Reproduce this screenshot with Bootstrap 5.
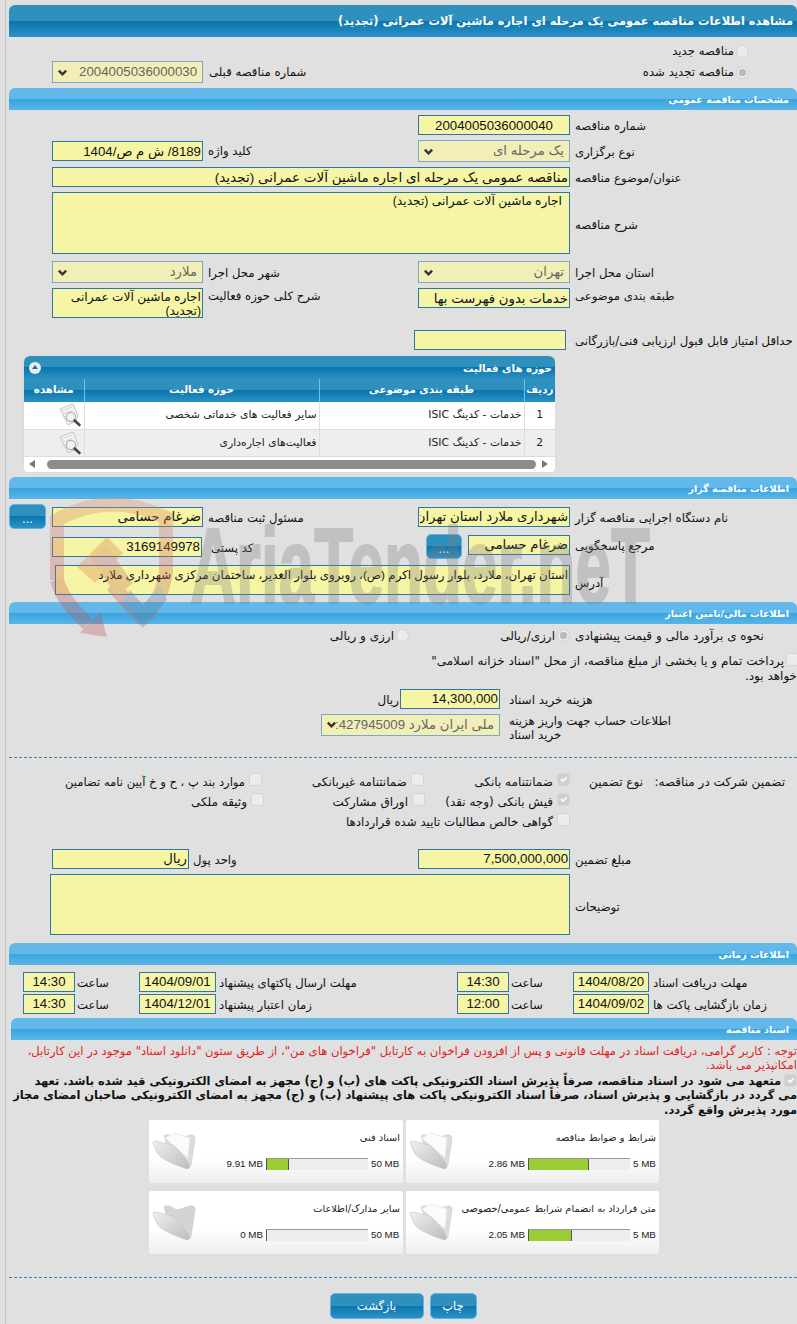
<!DOCTYPE html>
<html lang="fa" dir="rtl">
<head>
<meta charset="utf-8">
<title>مشاهده اطلاعات مناقصه</title>
<link href="https://cdn.jsdelivr.net/npm/bootstrap@5.3.0/dist/css/bootstrap.min.css" rel="stylesheet">
<style>
html,body{margin:0;padding:0;background:#e0e0e0;}
body{font-family:"DejaVu Sans",sans-serif;font-size:11.7px;line-height:14.5px;color:#111;overflow-x:hidden;}
.pg{position:relative;height:1324px;margin-left:5px;padding-left:3px;border-left:1px solid #c8c8c8;overflow:hidden;}
.ttl{height:32px;margin-top:5px;padding:9px 4px 0 0;color:#fff;font-weight:700;font-size:11.4px;border-radius:6px 6px 0 0;white-space:nowrap;overflow:hidden;background:linear-gradient(#2f90bd 0,#2f90bd 50%,#0a74ac 50%,#2b92c6 100%);}
.sec{height:22px;padding:5px 8px 0 0;color:#fff;font-weight:700;font-size:9.5px;line-height:13px;border-radius:6px 6px 0 0;background:linear-gradient(#62b9e9 0,#62b9e9 48%,#36a4df 48%,#5ab5e6 100%);}
.sec2{margin-left:2px;}
.rw{display:flex;align-items:flex-start;white-space:nowrap;}
.lbr{width:227px;flex:none;text-align:left;padding-left:5px;padding-top:4px;}
.lbl{width:215px;flex:none;text-align:left;padding-left:5px;padding-top:4px;}
.fr{width:152px;flex:none;}
.fl{width:151px;flex:none;}
.form-control.fld{height:20px;min-height:0;padding:0 1px;border:1px solid #2c77a7;border-radius:0;background:#f6f5a5;font-family:"Liberation Sans","DejaVu Sans",sans-serif;font-size:13.25px;line-height:18px;color:#111;box-shadow:none;}
.form-control.fld.big{font-size:13.5px;}
textarea.form-control.fld{resize:none;overflow:hidden;font-size:12.2px;line-height:14px;padding:1px;}
textarea.form-control.fld.ind{padding:1px 7px 1px 1px;}
textarea.form-control.fld.adr{font-size:11.8px;padding-top:2px;}
.form-select.sel{height:22px;padding:0 5px 0 14px;border:1px solid #7ea8c2;border-radius:0;font-family:"Liberation Sans","DejaVu Sans",sans-serif;font-size:13.25px;line-height:20px;color:#666;background-color:#f1efb7;background-image:url("data:image/svg+xml,%3Csvg xmlns='http://www.w3.org/2000/svg' viewBox='0 0 12 12'%3E%3Cpath d='M2 4l4 4 4-4' fill='none' stroke='%23333' stroke-width='2.6'/%3E%3C/svg%3E");background-position:left 4px center;background-size:11px 11px;box-shadow:none;opacity:1;}
.num{text-align:center;}
.m0{margin-top:1px;}.m1{margin-top:5px;}.m2{margin-top:6px;}.m3{margin-top:7px;}.m4{margin-top:8px;}
.rd{display:flex;align-items:center;gap:2px;}
.form-check-input.ck{float:none;flex:none;width:13px;height:13px;margin:0;border:1px solid #d4d4d4;background-color:#ececec;opacity:1;box-shadow:none;}
.form-check-input.ck[type=checkbox]{border-radius:3px;}
.form-check-input.ck[type=checkbox]:checked{background-color:#cfcfcf;border-color:#d8d8d8;}
.form-check-input.ck[type=radio]:checked{background-color:#ececec;border-color:#d0d0d0;background-image:radial-gradient(circle,#bbb 0,#bbb 3.5px,transparent 4px);}
.radA{padding:4px 48px 0 0;height:24px;}
.radB{justify-content:space-between;height:22px;padding-left:43px;padding-right:48px;}
.gp{width:6px;flex:none;}
.gp4{width:4px;flex:none;}
.fw{width:518px;flex:none;}
.tb{width:531px;margin:6px 242px 0 0;background:#fff;border-radius:6px 6px 4px 4px;overflow:hidden;box-shadow:0 0 1px #aac;position:relative;}
.tbh{height:23px;color:#fff;font-weight:700;font-size:10.3px;padding:5px 3px 0 0;background:linear-gradient(#2f90bd 0,#2f90bd 50%,#0a74ac 50%,#2b92c6 100%);position:relative;}
.tog{position:absolute;left:5px;top:6px;width:12px;height:12px;border-radius:50%;background:#e8eef3;}
.tog::before{content:"";position:absolute;left:3px;top:3px;border:3px solid transparent;border-bottom:4px solid #1e6f9f;border-top:0;}
.table.grd{margin:0;table-layout:fixed;width:531px;--bs-table-bg:transparent;font-size:10.8px;}
.grd col.c1{width:31px;}.grd col.c2{width:205px;}.grd col.c3{width:235px;}.grd col.c4{width:60px;}
.grd th{height:23px;padding:3px 0 0;color:#fff;font-size:10.3px;font-weight:700;text-align:center;border:0;border-left:1px solid #6fc0ea;background:linear-gradient(#2f90bd 0,#2f90bd 50%,#0a74ac 50%,#2b92c6 100%);vertical-align:top;white-space:nowrap;}
.grd th:last-child{border-left:0;}
.grd td{height:27px;padding:6px 2px 0;border:0;border-left:1px solid #ddd;border-bottom:1px solid #ddd;vertical-align:top;background:#fff;color:#222;white-space:nowrap;}
.grd td:last-child{border-left:0;}
.grd tr.alt td{background:#eee;}
.grd td.ic{padding:1px 2px 0 0;text-align:right;line-height:0;}
.sb{height:15px;position:relative;background:#fff;}
.sbt{position:absolute;left:23px;right:19px;top:3px;height:9px;background:#8c8c8c;border-radius:5px;}
.arl,.arr{position:absolute;top:3px;border:4.5px solid transparent;}
.arl{left:5px;border-left:0;border-right:6px solid #777;}
.arr{right:7px;border-right:0;border-left:6px solid #777;}
.bt.btn{display:block;padding:0;border:1px solid #5bb6e6;border-radius:5px;color:#fff;font-size:11.5px;line-height:16px;background:linear-gradient(#2f90bd 0,#2f90bd 48%,#0a74ac 48%,#2b92c6 100%);flex:none;}
.btdot{width:37px;height:25px;padding-top:5px!important;}
.w36.btn{width:36px;}
.bup{margin-top:-3px;}
.w102{width:102px;flex:none;}
.w150{width:150px;flex:none;}
.lbk{width:224px;flex:none;text-align:left;padding:7px 0 0 9px;}
.t1{margin-top:1px;}.t3{margin-top:3px;}
.addr{width:515px;flex:none;}
.form-control.fld.h30{height:30px;}
.form-control.fld.h62{height:62px;}
.form-control.fld.h61{height:61px;}
.hrdash{border:0;border-top:1px dashed #3f7fa8;opacity:1;margin:0;}
.mny{font-size:12px;}
.rh14{height:14px;margin-top:5px;}
.rad2{width:161px;flex:none;}
.payp{margin-top:10px;height:30px;line-height:15px;white-space:nowrap;}
.payp .ck{vertical-align:-1px;margin:0 -2px 0 2px;}
.lbd{width:297px;flex:none;text-align:left;padding:4px 0 0 9px;}
.w100{width:100px;flex:none;}
.w179{width:179px;flex:none;}
.ril{padding:4px 1px 0 0;}
.hr1{margin-top:14px;}
.gr{height:20px;}
.gr1{margin-top:15px;}
.guar{width:137px;flex:none;text-align:right;padding:2px 12px 0 0;}
.gt{width:90px;flex:none;text-align:right;padding:2px 17px 0 0;}
.gsp{width:227px;flex:none;}
.gi{display:flex;align-items:flex-start;gap:4px;}
.gi span{padding-top:2px;}
.gi span.nar{font-size:11.55px;}
.gi span.nar2{font-size:11.8px;}
.g1{width:146px;flex:none;}.g2{width:162px;flex:none;}
.g1b{width:145px;flex:none;}.g2b{width:161px;flex:none;}
.amt{margin-top:16px;}
.lbu{width:229px;flex:none;text-align:left;padding:4px 0 0 4px;}
.w137{width:137px;flex:none;}
.w520{width:520px;flex:none;}
.lb1{width:148px;flex:none;text-align:left;padding:4px 0 0 4px;}
.lb2{width:241px;flex:none;text-align:left;padding:4px 0 0 3px;}
.fd1{width:76px;flex:none;}.fd2{width:77px;flex:none;}.ft{width:52px;flex:none;}
.sa{width:64px;flex:none;text-align:left;padding:4px 0 0 2px;}
.gap2{margin-top:2px;}
.red{color:#e11d1d;margin-top:4px;white-space:nowrap;font-size:11.55px;}
.bld{font-weight:700;margin-top:1px;height:44px;white-space:nowrap;color:#111;font-size:11.45px;}
.bld .ck{vertical-align:-2px;margin-left:3px;}
.cards{display:grid;grid-template-columns:253px 254px;column-gap:3px;row-gap:8px;justify-content:start;margin:2px 138px 0 0;}
.fc{height:63px;position:relative;border-radius:2px;background:linear-gradient(#fff 0,#fff 60%,#eee 100%);box-shadow:0 0 1px #ddd;}
.fct{position:absolute;right:3px;top:11px;font-size:9.8px;color:#222;white-space:nowrap;}
.fcb{position:absolute;right:5px;top:37px;display:flex;align-items:center;gap:3px;font-family:"Liberation Sans",sans-serif;font-size:9.8px;color:#222;direction:ltr;flex-direction:row-reverse;white-space:nowrap;}
.mb5{width:21px;}.mb50{width:27px;}
.brr{width:102px;height:12px;background:#eee;border-top:1px solid #999;border-left:1px solid #555;position:relative;direction:ltr;}
.brf{height:11px;background:#9acd32;border-right:1px solid #555;}
.brf0{width:0;border-right:0;}.brf1{width:60px;}.brf2{width:43px;}.brf3{width:22px;}
.fic{position:absolute;left:3px;top:12px;width:44px;height:40px;}
.hd1{margin-top:23px;}
.actions{display:flex;justify-content:center;gap:6px;margin-top:15px;}
.bpr{width:47px;height:26px;}.bbk{width:94px;height:26px;}
.wm{position:absolute;left:-6px;top:0;width:797px;height:1324px;pointer-events:none;}
.rw .s5{padding-top:5px;}.rw .s1{padding-top:1px;}.rw .s26{padding-top:26px;}.rw .s10{padding-top:11px;}.rw .s0{padding-top:0;}
</style>
</head>
<body>
<div class="pg">
  <div class="ttl">مشاهده اطلاعات مناقصه عمومی یک مرحله ای اجاره ماشین آلات عمرانی (تجدید)</div>
  <div class="rd radA"><input class="form-check-input ck" type="radio" disabled><span>مناقصه جدید</span></div>
  <div class="rw radB">
    <div class="rd h-100"><input class="form-check-input ck" type="radio" checked disabled><span>مناقصه تجدید شده</span></div>
    <div class="d-flex align-items-center">
      <span>شماره مناقصه قبلی</span><span class="gp"></span>
      <select class="form-select sel fl" disabled><option>2004005036000030</option></select>
    </div>
  </div>
  <div class="sec m1">مشخصات مناقصه عمومی</div>

  <div class="rw m1"><div class="lbr">شماره مناقصه</div><div class="fr"><input class="form-control fld num" value="2004005036000040" readonly></div></div>
  <div class="rw m1">
    <div class="lbr s5">نوع برگزاری</div><div class="fr"><select class="form-select sel" disabled><option>یک مرحله ای</option></select></div>
    <div class="lbl">کلید واژه</div><div class="fl m0"><input class="form-control fld" value="8189/ ش م ص/1404" readonly></div>
  </div>
  <div class="rw m1"><div class="lbr">عنوان/موضوع مناقصه</div><div class="fw"><input class="form-control fld big" value="مناقصه عمومی یک مرحله ای اجاره ماشین آلات عمرانی (تجدید)" readonly></div></div>
  <div class="rw m1"><div class="lbr s26">شرح مناقصه</div><div class="fw"><textarea class="form-control fld h62 ind" readonly>اجاره ماشین آلات عمرانی (تجدید)</textarea></div></div>
  <div class="rw m3">
    <div class="lbr s5">استان محل اجرا</div><div class="fr"><select class="form-select sel" disabled><option>تهران</option></select></div>
    <div class="lbl s5">شهر محل اجرا</div><div class="fl"><select class="form-select sel" disabled><option>ملارد</option></select></div>
  </div>
  <div class="rw m1">
    <div class="lbr s1">طبقه بندی موضوعی</div><div class="fr"><input class="form-control fld" value="خدمات بدون فهرست بها" readonly></div>
    <div class="lbl s1">شرح کلی حوزه فعالیت</div><div class="fl"><textarea class="form-control fld h30" readonly>اجاره ماشین آلات عمرانی (تجدید)</textarea></div>
  </div>
  <div class="rw mt-2 pt-1">
    <div class="lbr">حداقل امتیاز قابل قبول ارزیابی فنی/بازرگانی</div><span class="gp4"></span><div class="fr"><input class="form-control fld" readonly></div>
  </div>

  <div class="tb">
    <div class="tbh">حوزه های فعالیت<span class="tog"></span></div>
    <table class="table grd">
      <colgroup><col class="c1"><col class="c2"><col class="c3"><col class="c4"></colgroup>
      <thead><tr><th>ردیف</th><th>طبقه بندی موضوعی</th><th>حوزه فعالیت</th><th>مشاهده</th></tr></thead>
      <tbody>
        <tr><td class="text-center">1</td><td>خدمات - کدینگ ISIC</td><td>سایر فعالیت های خدماتی شخصی</td><td class="ic"><svg width="25" height="24" viewBox="0 0 25 24"><use href="#doc"/></svg></td></tr>
        <tr class="alt"><td class="text-center">2</td><td>خدمات - کدینگ ISIC</td><td>فعالیت‌های اجاره‌داری</td><td class="ic"><svg width="25" height="24" viewBox="0 0 25 24"><use href="#doc"/></svg></td></tr>
      </tbody>
    </table>
    <div class="sb"><span class="arl"></span><span class="sbt"></span><span class="arr"></span></div>
  </div>

  <div class="sec m1">اطلاعات مناقصه گزار</div>
  <div class="rw m4">
    <div class="lbr">نام دستگاه اجرایی مناقصه گزار</div><div class="fr"><input class="form-control fld" value="شهرداری ملارد استان تهران" readonly></div>
    <div class="lbl">مسئول ثبت مناقصه</div><div class="fl"><input class="form-control fld" value="ضرغام حسامی" readonly></div>
    <span class="gp"></span><button class="btn bt btdot bup" type="button">...</button>
  </div>
  <div class="rw m1">
    <div class="lbr s5">مرجع پاسخگویی</div>
    <div class="w102 t1"><input class="form-control fld" value="ضرغام حسامی" readonly></div>
    <span class="gp"></span><button class="btn bt btdot w36" type="button">...</button>
    <div class="lbk">کد پستی</div>
    <div class="w150 t3"><input class="form-control fld" value="3169149978" readonly></div>
  </div>
  <div class="rw m2">
    <div class="lbr s10">آدرس</div>
    <div class="addr"><textarea class="form-control fld h30 adr" readonly>استان تهران، ملارد، بلوار رسول اکرم (ص)، روبروی بلوار الغدیر، ساختمان مرکزی شهرداری ملارد</textarea></div>
  </div>

  <div class="sec m3">اطلاعات مالی/تامین اعتبار</div>
  <div class="rw rh14 mny">
    <div class="lbr s0">نحوه ی برآورد مالی و قیمت پیشنهادی</div>
    <div class="rd rad2"><input class="form-check-input ck" type="radio" checked disabled><span>ارزی/ریالی</span></div>
    <div class="rd"><input class="form-check-input ck" type="radio" disabled><span>ارزی و ریالی</span></div>
  </div>
  <div class="payp mny"><input class="form-check-input ck" type="checkbox" disabled>پرداخت تمام و یا بخشی از مبلغ مناقصه، از محل "اسناد خزانه اسلامی"<br>خواهد بود.</div>
  <div class="rw m2 mny">
    <div class="lbd">هزینه خرید اسناد</div>
    <div class="w100"><input class="form-control fld" value="14,300,000" readonly></div>
    <div class="ril">ریال</div>
  </div>
  <div class="rw m1">
    <div class="lbd s0">اطلاعات حساب جهت واریز هزینه<br>خرید اسناد</div>
    <div class="w179"><select class="form-select sel" disabled><option>ملی ایران ملارد 427945009:</option></select></div>
  </div>
  <hr class="hrdash hr1">

  <div class="rw gr gr1 mny">
    <div class="guar">تضمین شرکت در مناقصه:</div>
    <div class="gt">نوع تضمین</div>
    <div class="gi g1"><input class="form-check-input ck" type="checkbox" checked disabled><span>ضمانتنامه بانکی</span></div>
    <div class="gi g2"><input class="form-check-input ck" type="checkbox" disabled><span>ضمانتنامه غیربانکی</span></div>
    <div class="gi"><input class="form-check-input ck" type="checkbox" disabled><span class="nar">موارد بند پ ، ح و خ آیین نامه تضامین</span></div>
  </div>
  <div class="rw gr mny">
    <div class="gsp"></div>
    <div class="gi g1b"><input class="form-check-input ck" type="checkbox" checked disabled><span>فیش بانکی (وجه نقد)</span></div>
    <div class="gi g2b"><input class="form-check-input ck" type="checkbox" disabled><span>اوراق مشارکت</span></div>
    <div class="gi"><input class="form-check-input ck" type="checkbox" disabled><span>وثیقه ملکی</span></div>
  </div>
  <div class="rw gr mny">
    <div class="gsp"></div>
    <div class="gi"><input class="form-check-input ck" type="checkbox" disabled><span class="nar2">گواهی خالص مطالبات تایید شده قراردادها</span></div>
  </div>

  <div class="rw amt">
    <div class="lbr">مبلغ تضمین</div><div class="fr"><input class="form-control fld" value="7,500,000,000" readonly></div>
    <div class="lbu">واحد پول</div><div class="w137"><input class="form-control fld" value="ریال" readonly></div>
  </div>
  <div class="rw m1">
    <div class="lbr s26">توضیحات</div><div class="w520"><textarea class="form-control fld h61" readonly></textarea></div>
  </div>

  <div class="sec m4">اطلاعات زمانی</div>
  <div class="rw m3">
    <div class="lb1">مهلت دریافت اسناد</div><div class="fd1"><input class="form-control fld num" value="1404/08/20" readonly></div>
    <div class="sa">ساعت</div><div class="ft"><input class="form-control fld num" value="14:30" readonly></div>
    <div class="lb2">مهلت ارسال پاکتهای پیشنهاد</div><div class="fd2"><input class="form-control fld num" value="1404/09/01" readonly></div>
    <div class="sa">ساعت</div><div class="ft"><input class="form-control fld num" value="14:30" readonly></div>
  </div>
  <div class="rw gap2">
    <div class="lb1">زمان بازگشایی پاکت ها</div><div class="fd1"><input class="form-control fld num" value="1404/09/02" readonly></div>
    <div class="sa">ساعت</div><div class="ft"><input class="form-control fld num" value="12:00" readonly></div>
    <div class="lb2">زمان اعتبار پیشنهاد</div><div class="fd2"><input class="form-control fld num" value="1404/12/01" readonly></div>
    <div class="sa">ساعت</div><div class="ft"><input class="form-control fld num" value="14:30" readonly></div>
  </div>

  <div class="sec sec2 mt-1">اسناد مناقصه</div>
  <div class="red">توجه : کاربر گرامی، دریافت اسناد در مهلت قانونی و پس از افزودن فراخوان به کارتابل "فراخوان های من"، از طریق ستون "دانلود اسناد" موجود در این کارتابل،<br>امکانپذیر می باشد.</div>
  <div class="bld"><input class="form-check-input ck" type="checkbox" checked disabled>متعهد می شود در اسناد مناقصه، صرفاً پذیرش اسناد الکترونیکی پاکت های (ب) و (ج) مجهز به امضای الکترونیکی قید شده باشد. تعهد<br>می گردد در بازگشایی و پذیرش اسناد، صرفاً اسناد الکترونیکی پاکت های پیشنهاد (ب) و (ج) مجهز به امضای الکترونیکی صاحبان امضای مجاز<br>مورد پذیرش واقع گردد.</div>

  <div class="cards">
    <div class="fc"><div class="fct">شرایط و ضوابط مناقصه</div><div class="fcb"><span class="mb5">5 MB</span><div class="brr"><div class="brf brf1"></div></div><span>2.86 MB</span></div><svg class="fic" viewBox="0 0 44 40"><use href="#fold"/></svg></div>
    <div class="fc"><div class="fct">اسناد فنی</div><div class="fcb"><span class="mb50">50 MB</span><div class="brr"><div class="brf brf3"></div></div><span>9.91 MB</span></div><svg class="fic" viewBox="0 0 44 40"><use href="#fold"/></svg></div>
    <div class="fc"><div class="fct">متن قرارداد به انضمام شرایط عمومی/خصوصی</div><div class="fcb"><span class="mb5">5 MB</span><div class="brr"><div class="brf brf2"></div></div><span>2.05 MB</span></div><svg class="fic" viewBox="0 0 44 40"><use href="#fold"/></svg></div>
    <div class="fc"><div class="fct">سایر مدارک/اطلاعات</div><div class="fcb"><span class="mb50">50 MB</span><div class="brr"><div class="brf brf0"></div></div><span>0 MB</span></div><svg class="fic" viewBox="0 0 44 40"><use href="#fold0"/></svg></div>
  </div>

  <hr class="hrdash hd1">
  <div class="actions">
    <button class="btn bt bpr" type="button">چاپ</button>
    <button class="btn bt bbk" type="button">بازگشت</button>
  </div>

  <svg class="wm" viewBox="0 0 797 1324" aria-hidden="true">
    <defs>
      <linearGradient id="fg" x1="0" y1="0" x2="1" y2="1"><stop offset="0" stop-color="#f0f0f0"/><stop offset="1" stop-color="#bcbcbc"/></linearGradient>
      <linearGradient id="shg" x1="0" y1="0" x2="0" y2="1"><stop offset="0" stop-color="#d98a6a"/><stop offset="1" stop-color="#c0565a"/></linearGradient>
      <g id="doc">
        <path d="M3 6 16 1l5 12-2 5-8 4z" fill="#f6f6f6" stroke="#c4c4c4"/>
        <path d="M5 8l10-4M6 11l10-4M7 14l5-2M8 17l3-1" stroke="#d0d0d0" fill="none"/>
        <circle cx="14" cy="14" r="4.6" fill="#eef3f4" stroke="#b0b0b0" stroke-width="1.2"/>
        <path d="M17.5 17.5l5 4.5" stroke="#444" stroke-width="2.6" stroke-linecap="round"/>
      </g>
      <g id="fold">
        <path d="M12 4Q14 2 17 3L25 7 38 3Q43 2 43 7L39 33Q38 37 35 36L18 22z" fill="#dcdcdc" stroke="#ccc" stroke-width=".6"/>
        <path d="M13 6 22 1 38 6 36 26 22 14z" fill="#fbfbfb" stroke="#e2e2e2" stroke-width=".6"/>
        <path d="M1 11Q1 9 4 9L20 13Q23 14 25 17L36 30Q39 37 35 37 20 32 10 26 5 22 4 18z" fill="url(#fg)" stroke="#c4c4c4" stroke-width=".6"/>
      </g>
      <g id="fold0">
        <path d="M12 4Q14 2 17 3L25 7 38 3Q43 2 43 7L39 33Q38 37 35 36L18 22z" fill="#d4d4d4" stroke="#c4c4c4" stroke-width=".6"/>
        <path d="M1 11Q1 9 4 9L20 13Q23 14 25 17L36 30Q39 37 35 37 20 32 10 26 5 22 4 18z" fill="url(#fg)" stroke="#c4c4c4" stroke-width=".6"/>
      </g>
    </defs>
    <g opacity=".33">
      <path d="M57 580V520Q110 490 166 518V572Q162 600 143 618Q130 605 112 585" fill="none" stroke="url(#shg)" stroke-width="14"/>
      <path d="M57 580Q62 600 88 624" fill="none" stroke="#c0565a" stroke-width="14"/>
      <path d="M80 633 100 612 107 637z" fill="#c0565a"/>
      <path d="M77 567 107 537 123 553 95 583z" fill="#d9824a"/>
      <path d="M90 557 107 547 133 583 117 597z" fill="#c9705a"/>
      <path d="M123 600 143 625 167 600 160 585 143 605 130 590z" fill="#56749a"/>
    </g>
    <text x="190" y="603" direction="ltr" text-anchor="start" textLength="460" lengthAdjust="spacingAndGlyphs" font-family="Liberation Sans" font-weight="700" font-size="108" fill="#7d7d7d" stroke="#7d7d7d" stroke-width="2" opacity=".3">AriaTender.neT</text>
  </svg>
</div>
</body>
</html>
